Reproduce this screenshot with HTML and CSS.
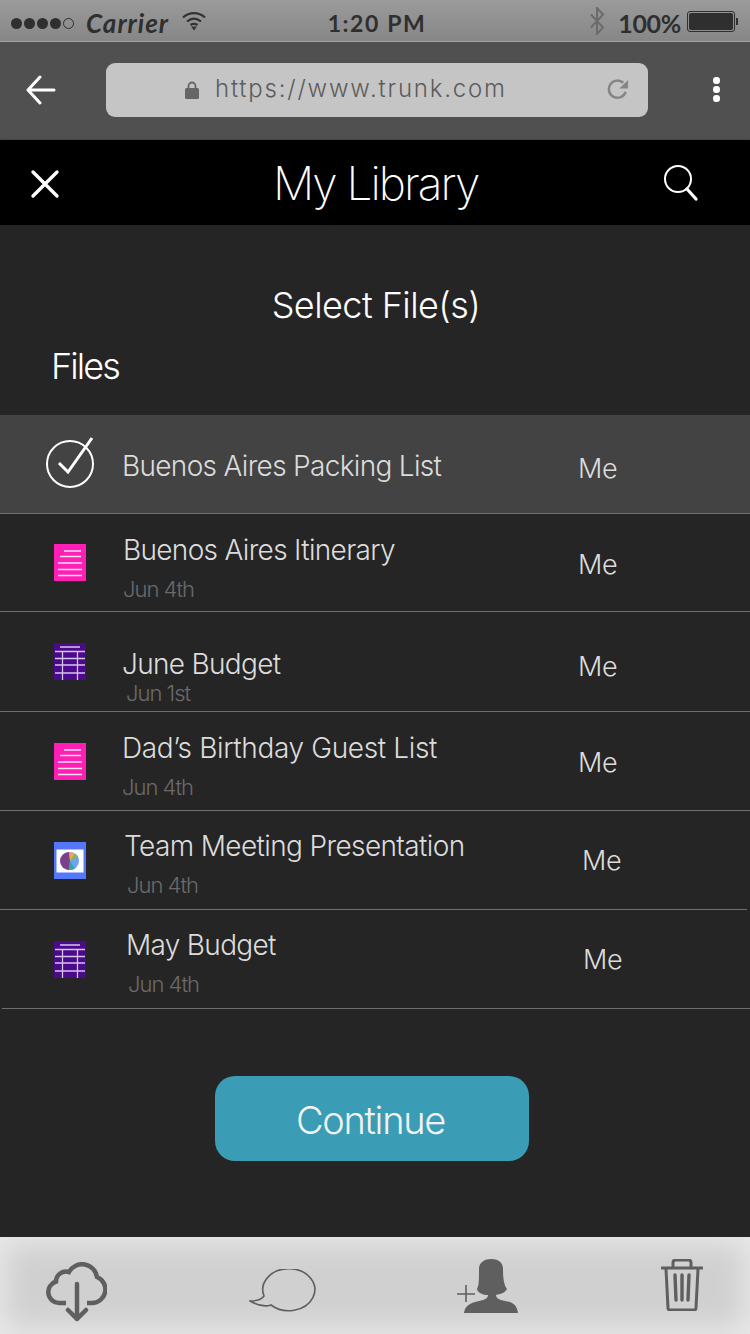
FILE: index.html
```html
<!DOCTYPE html>
<html lang="en">
<head>
  <meta charset="UTF-8">
  <meta name="viewport" content="width=device-width, initial-scale=1.0">
  <title>My Library</title>
  <link rel="stylesheet" href="styles.css">
</head>
<body>
  <div class="page">
    <div class="status-bar">
      <div class="status-left">
        <span class="signal"><i></i><i></i><i></i><i></i><i class="off"></i></span>
        <span class="carrier">Carrier</span>
        <svg class="wifi" viewBox="0 0 24 20"><path d="M1 6.500C7.500 .7 16.500 .7 23 6.500M5 10.500C9.500 6.700 14.500 6.700 19 10.500M8.500 14C11 12.300 13 12.300 15.500 14" fill="none" stroke="#333" stroke-width="2.200"/><path d="M9 15.500h6l-3 4z" fill="#333"/></svg>
      </div>
      <span class="clock">1:20 PM</span>
      <div class="status-right">
        <svg class="bt" viewBox="0 0 16 28"><path d="M2 7.500l12 13-6 6.500V1l6 6.500-12 13" fill="none" stroke="#6b6b6b" stroke-width="2"/></svg>
        <span class="battery-text">100%</span>
        <span class="battery"><span class="battery-fill"></span></span>
        <span class="battery-tip"></span>
      </div>
    </div>

    <div class="browser-bar">
      <svg class="back" viewBox="0 0 30 30"><path d="M28 15H3M14 2L2 15l12 13" fill="none" stroke="#fff" stroke-width="3" stroke-linecap="round" stroke-linejoin="round"/></svg>
      <div class="url-box">
        <svg class="lock" viewBox="0 0 14 18"><path d="M3.500 8V5a3.500 3.500 0 0 1 7 0v3" fill="none" stroke="#666" stroke-width="1.800"/><rect x="0" y="7" width="14" height="11" rx="1.500" fill="#666"/></svg>
        <span class="url">https://www.trunk.com</span>
        <svg class="reload" viewBox="0 0 24 24"><path d="M19.500 14.500A9 9 0 1 1 17 5" fill="none" stroke="#858585" stroke-width="2.600"/><path d="M22 2v9h-9z" fill="#858585"/></svg>
      </div>
      <span class="kebab"><i></i><i></i><i></i></span>
    </div>

    <header class="app-header">
      <svg class="close" viewBox="0 0 30 30"><path d="M3 3l24 24M27 3L3 27" stroke="#fff" stroke-width="3.400" stroke-linecap="round"/></svg>
      <h1>My Library</h1>
      <svg class="search" viewBox="0 0 36 38"><circle cx="15" cy="15" r="13" fill="none" stroke="#fff" stroke-width="2"/><path d="M24 25l9 10" stroke="#fff" stroke-width="3.200" stroke-linecap="round"/></svg>
    </header>

    <main class="content">
      <h2 class="select-title">Select File(s)</h2>
      <h3 class="files-title">Files</h3>
      <ul class="file-list">
        <li class="file-row row-selected">
          <svg class="check" viewBox="0 0 50 52"><circle cx="25" cy="28" r="23" fill="none" stroke="#fff" stroke-width="2"/><path d="M14 27l9 9L47 2" fill="none" stroke="#fff" stroke-width="3"/></svg>
          <div class="file-text"><div class="file-name">Buenos Aires Packing List</div></div>
          <span class="owner">Me</span>
        </li>
        <li class="file-row row-itinerary">
          <svg class="file-icon" viewBox="0 0 32 37"><use href="#doc-icon"/></svg>
          <div class="file-text"><div class="file-name">Buenos Aires Itinerary</div><div class="file-date">Jun 4th</div></div>
          <span class="owner">Me</span>
        </li>
        <li class="file-row row-june">
          <svg class="file-icon" viewBox="0 0 32 37"><use href="#sheet-icon"/></svg>
          <div class="file-text"><div class="file-name">June Budget</div><div class="file-date">Jun 1st</div></div>
          <span class="owner">Me</span>
        </li>
        <li class="file-row row-dad">
          <svg class="file-icon" viewBox="0 0 32 37"><use href="#doc-icon"/></svg>
          <div class="file-text"><div class="file-name">Dad’s Birthday Guest List</div><div class="file-date">Jun 4th</div></div>
          <span class="owner">Me</span>
        </li>
        <li class="file-row row-team">
          <svg class="file-icon" viewBox="0 0 32 37">
            <rect width="32" height="37.500" fill="#5578fb"/>
            <rect x="2.500" y="7.500" width="27" height="23" fill="#fff"/>
            <circle cx="16" cy="19" r="9" fill="#6ea2f5"/>
            <path d="M16 19l-1-9a9 9 0 0 0 0 18z" fill="#7b3f8c"/>
            <path d="M16 19l-1-9a9 9 0 0 1 6 1.500z" fill="#eba85a"/>
            <path d="M16 19l5-7.500a9 9 0 0 1 3.500 4z" fill="#7fb56d"/>
            <path d="M16 19l-1 9a9 9 0 0 0 6-1.500z" fill="#3aa5a3"/>
          </svg>
          <div class="file-text"><div class="file-name">Team Meeting Presentation</div><div class="file-date">Jun 4th</div></div>
          <span class="owner">Me</span>
        </li>
        <li class="file-row row-may">
          <svg class="file-icon" viewBox="0 0 32 37"><use href="#sheet-icon"/></svg>
          <div class="file-text"><div class="file-name">May Budget</div><div class="file-date">Jun 4th</div></div>
          <span class="owner">Me</span>
        </li>
      </ul>
      <div class="actions"><button class="continue-btn">Continue</button></div>
    </main>

    <footer class="tab-bar">
      <svg class="tab-cloud" viewBox="0 0 61 60"><path d="M20 41H13A11 11 0 0 1 10 19.500A10 10 0 0 1 23 10A15 15 0 0 1 51 15A13.500 13.500 0 0 1 46 41H41" fill="none" stroke="#5f5f5f" stroke-width="4.500"/><path d="M31 22v35M22 48l9 9 9-9" fill="none" stroke="#5f5f5f" stroke-width="4.500" stroke-linecap="round" stroke-linejoin="round"/></svg>
      <svg class="tab-chat" viewBox="0 0 67 44"><path d="M15 27A26 21 0 1 1 22 36C16 38 8 36 1 32C7 32 12 31 15 27Z" fill="none" stroke="#5f5f5f" stroke-width="1.600"/></svg>
      <svg class="tab-person" viewBox="0 0 62 56"><path d="M7 54C8 46 14 44 22 42C28 41 31 39 31 36C26 36 21 34 20 30C22 26 22 22 22 10C22 3 28 0 34 0C41 0 46 3 46 10C46 20 47 26 50 30C48 34 43 35 39 36C39 39 42 41 48 42C56 43 60 46 61 54Z" fill="#5f5f5f"/><path d="M0 35h18M9 26v17" stroke="#5f5f5f" stroke-width="1.600"/></svg>
      <svg class="tab-trash" viewBox="0 0 42 52"><path d="M1 9h40M12 8V3.500Q12 1 15 1h12q3 0 3 2.500V8M5 10l2 39q0 2 2 2h24q2 0 2-2l2-39" fill="none" stroke="#5f5f5f" stroke-width="3" stroke-linecap="round"/><path d="M14 16l1 25M21 16v25M28 16l-1 25" stroke="#5f5f5f" stroke-width="3.400" stroke-linecap="round"/></svg>
    </footer>
  </div>

  <svg class="icon-defs" width="0" height="0">
    <defs>
      <g id="doc-icon">
        <rect width="32" height="37" fill="#ff1fb4"/>
        <path d="M10 7h17M6 12.500h21M4 19h24M4 25.500h24M4 31.500h24" stroke="#fbe2f3" stroke-width="1.500"/>
      </g>
      <g id="sheet-icon">
        <rect width="32" height="37" fill="#4b0a8c"/>
        <path d="M6 4h20M1 8.500h30M1 15.500h30M1 22h30M1 30h30M8.500 8.500V37M23.500 8.500V37" stroke="#d6c3ea" stroke-width="1.300"/>
      </g>
    </defs>
  </svg>
</body>
</html>
```

FILE: styles.css
```css
body, html {
  margin: 0;
  padding: 0;
  background: #252525;
}
.page {
  width: 750px;
  height: 1334px;
  display: flex;
  flex-direction: column;
  overflow: hidden;
  font-family: 'Inter', 'Liberation Sans', sans-serif;
}
.icon-defs {
  position: absolute;
}

/* status bar */
.status-bar {
  height: 41px;
  flex: none;
  box-sizing: border-box;
  display: flex;
  align-items: center;
  justify-content: space-between;
  padding: 5px 12px 0 8px;
  background: linear-gradient(#9b9b9b, #868686);
  color: #2f2f2f;
}
.status-left, .status-right {
  display: flex;
  align-items: center;
  width: 260px;
}
.status-right {
  justify-content: flex-end;
}
.signal {
  display: flex;
  gap: 2px;
  margin-left: 3px;
}
.signal i {
  width: 11px;
  height: 11px;
  border-radius: 50%;
  background: #2f2f2f;
}
.signal i.off {
  width: 9px;
  height: 9px;
  background: none;
  border: 1px solid #2f2f2f;
}
.carrier {
  margin-left: 12px;
  font-family: 'Lato', sans-serif;
  font-style: italic;
  font-weight: 700;
  font-size: 26px;
  letter-spacing: 1px;
}
.wifi {
  width: 24px;
  height: 20px;
  margin-left: 13px;
  margin-top: -4px;
}
.clock {
  margin-left: 8px;
  font-family: 'Lato', sans-serif;
  font-weight: 700;
  font-size: 23px;
  letter-spacing: 1.600px;
}
.bt {
  width: 16px;
  height: 28px;
  margin-right: 13px;
  margin-top: -4px;
}
.battery-text {
  font-family: 'Lato', sans-serif;
  font-weight: 700;
  font-size: 25px;
  letter-spacing: -.3px;
  margin-right: 6px;
}
.battery {
  height: 17px;
  padding: 1px;
  border: 1px solid #2f2f2f;
  border-radius: 3px;
  width: 44px;
  margin-top: -3px;
}
.battery-fill {
  display: block;
  width: 100%;
  height: 100%;
  background: #2f2f2f;
  border-radius: 2px;
}
.battery-tip {
  width: 2px;
  height: 7px;
  margin-left: 1px;
  margin-top: -3px;
  background: #2f2f2f;
}

/* browser bar */
.browser-bar {
  height: 99px;
  flex: none;
  box-sizing: border-box;
  display: flex;
  align-items: center;
  background: #505050;
  border-top: 1px solid #a3a3a3;
}
.back {
  width: 30px;
  height: 30px;
  margin-left: 26px;
  margin-top: -3px;
}
.url-box {
  width: 542px;
  height: 54px;
  margin-left: 50px;
  margin-top: -3px;
  display: flex;
  align-items: center;
  background: #c5c5c5;
  border-radius: 9px;
}
.lock {
  width: 14px;
  height: 18px;
  margin-left: 79px;
}
.url {
  margin-left: 16px;
  margin-top: -2px;
  font-size: 24px;
  font-weight: 300;
  letter-spacing: 1.800px;
  color: #5c5c5c;
}
.reload {
  width: 23px;
  height: 23px;
  margin-left: auto;
  margin-right: 18px;
}
.kebab {
  display: flex;
  flex-direction: column;
  gap: 2.500px;
  margin-left: 65px;
  margin-top: -3px;
}
.kebab i {
  width: 6.500px;
  height: 6.500px;
  border-radius: 50%;
  background: #fff;
}

/* black header */
.app-header {
  height: 85px;
  flex: none;
  display: flex;
  align-items: center;
  background: #000;
  box-shadow: 0 1px 3px rgba(0,0,0,.6);
}
.close {
  width: 30px;
  height: 30px;
  margin-left: 30px;
  margin-top: 2px;
}
.app-header h1 {
  margin: 0 0 0 213px;
  width: 206px;
  white-space: nowrap;
  font-size: 46px;
  font-weight: 200;
  letter-spacing: -2px;
  color: #fff;
}
.search {
  width: 36px;
  height: 38px;
  margin-left: 184px;
}

/* content */
.content {
  flex: 1;
  background: #252525;
}
.select-title {
  margin: 58px 0 0;
  padding-left: 2px;
  text-align: center;
  font-size: 36px;
  font-weight: 300;
  line-height: 44px;
  letter-spacing: -.55px;
  color: #fff;
}
.files-title {
  margin: 17px 0 0 51px;
  font-size: 36px;
  font-weight: 300;
  line-height: 44px;
  letter-spacing: -1.900px;
  color: #fff;
}
.file-list {
  list-style: none;
  margin: 27px 0 0;
  padding: 0;
}
.file-row {
  display: flex;
  align-items: center;
  box-sizing: border-box;
  height: 99px;
  border-bottom: 1px solid #6f6f6f;
  color: #dcdcdc;
}
.row-selected {
  background: #434343;
}
.check {
  width: 50px;
  height: 52px;
  margin-left: 45px;
  margin-top: -4px;
}
.row-selected .file-text {
  margin-left: 27px;
  width: 456px;
  margin-top: 4px;
}
.row-selected .owner { margin-top: 8px; }
.file-icon {
  width: 32px;
  height: 37px;
  margin-left: 54px;
  flex: none;
}
.file-text {
  margin-left: 37px;
  width: 456px;
}
.file-name {
  font-size: 28px;
  font-weight: 300;
  line-height: 34px;
  letter-spacing: -.68px;
  white-space: nowrap;
}
.file-date {
  margin-top: 9px;
  font-size: 22px;
  font-weight: 300;
  line-height: 26px;
  letter-spacing: -1px;
  color: #6a6a6a;
}
.owner {
  font-size: 27px;
  font-weight: 300;
  letter-spacing: -.2px;
}
.row-itinerary { height: 98px; }
.row-itinerary .file-text { width: 455px; margin-top: 10px; }
.row-itinerary .owner { margin-top: 3px; }
.row-june { height: 100px; }
.row-june .file-text { margin-left: 36px; margin-top: 29px; }
.row-june .file-date { margin-top: -1px; margin-left: 4px; }
.row-june .owner { margin-top: 10px; }
.row-dad .file-text { margin-left: 36px; margin-top: 9px; }
.row-dad .file-name { letter-spacing: -.36px; }
.row-dad .owner { margin-top: 2px; }
.row-team { width: 747px; }
.row-team .file-text { margin-left: 38px; width: 458px; margin-top: 7px; }
.row-team .file-name { letter-spacing: -.62px; }
.row-team .file-date { margin-left: 3px; }
.row-may { margin-left: 2px; }
.row-may .file-icon { margin-left: 52px; }
.row-may .file-text { margin-left: 40px; width: 457px; margin-top: 7px; }
.row-may .file-date { margin-left: 2px; }
.actions {
  display: flex;
  margin-top: 67px;
}
.continue-btn {
  width: 314px;
  height: 85px;
  margin-left: 215px;
  padding: 2px 3px 0 0;
  border: 0;
  border-radius: 20px;
  background: #3a9db5;
  color: #f2f2f2;
  font-family: inherit;
  font-size: 38px;
  font-weight: 300;
  letter-spacing: -1.300px;
}

/* bottom tabs */
.tab-bar {
  height: 97px;
  flex: none;
  display: flex;
  align-items: flex-start;
  justify-content: space-between;
  box-sizing: border-box;
  padding: 0 47px 0 46px;
  background: #d0d0d0;
  box-shadow: inset 0 0 28px 6px #e9e9e9;
  border-top: 1px solid #e4e4e4;
}
.tab-cloud { width: 61px; height: 60px; margin-top: 24px; }
.tab-chat { width: 67px; height: 44px; margin-top: 31px; }
.tab-person { width: 62px; height: 56px; margin-top: 21px; }
.tab-trash { width: 42px; height: 52px; margin-top: 21px; }
```
